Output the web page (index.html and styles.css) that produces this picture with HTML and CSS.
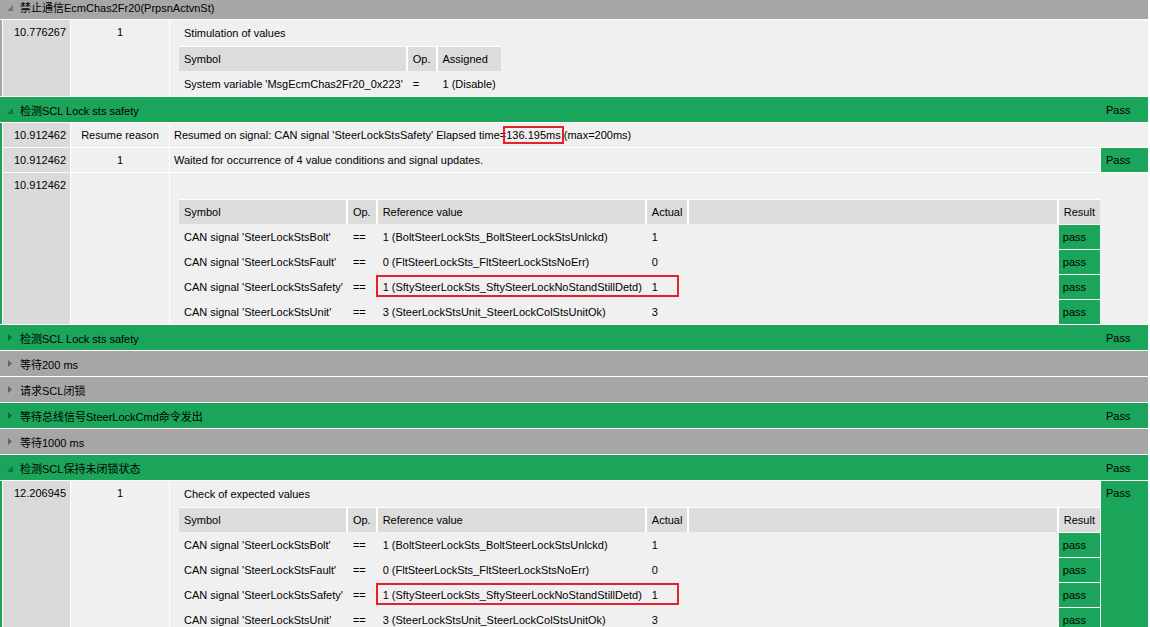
FILE: index.html
```
<!DOCTYPE html>
<html lang="en">
<head>
    <meta charset="UTF-8">
    <title>Test Report</title>
    <link rel="stylesheet" href="styles.css">
</head>
<body>
    <div class="report">

        <div class="section gray">
            <div class="sec-head">
                <svg class="tri open" width="6" height="6" viewBox="0 0 6 6"><polygon points="6,0 6,6 0,6"/></svg>
                <span class="title">禁止通信EcmChas2Fr20(PrpsnActvnSt)</span>
            </div>
            <div class="sec-body">
                <div class="row">
                    <div class="ts">10.776267</div>
                    <div class="step">1</div>
                    <div class="block span">
                        <div class="caption">Stimulation of values</div>
                        <table class="values">
                            <tr><th>Symbol</th><th>Op.</th><th>Assigned</th></tr>
                            <tr><td>System variable 'MsgEcmChas2Fr20_0x223'</td><td>=</td><td>1 (Disable)</td></tr>
                        </table>
                    </div>
                </div>
            </div>
        </div>

        <div class="section green">
            <div class="sec-head">
                <svg class="tri open" width="6" height="6" viewBox="0 0 6 6"><polygon points="6,0 6,6 0,6"/></svg>
                <span class="title">检测SCL Lock sts safety</span>
                <span class="verdict-label">Pass</span>
            </div>
            <div class="sec-body">
                <div class="row">
                    <div class="ts">10.912462</div>
                    <div class="step">Resume reason</div>
                    <div class="desc span">Resumed on signal: CAN signal 'SteerLockStsSafety' Elapsed time=<span class="hl">136.195ms</span> (max=200ms)</div>
                </div>
                <div class="row">
                    <div class="ts">10.912462</div>
                    <div class="step">1</div>
                    <div class="desc">Waited for occurrence of 4 value conditions and signal updates.</div>
                    <div class="verdict">Pass</div>
                </div>
                <div class="row">
                    <div class="ts">10.912462</div>
                    <div class="step"></div>
                    <div class="block span">
                        <div class="caption"></div>
                        <table class="values check short">
                            <tr><th>Symbol</th><th>Op.</th><th>Reference value</th><th>Actual</th><th class="fill"></th><th>Result</th></tr>
                            <tr><td>CAN signal 'SteerLockStsBolt'</td><td>==</td><td>1 (BoltSteerLockSts_BoltSteerLockStsUnlckd)</td><td>1</td><td></td><td class="pass">pass</td></tr>
                            <tr><td>CAN signal 'SteerLockStsFault'</td><td>==</td><td>0 (FltSteerLockSts_FltSteerLockStsNoErr)</td><td>0</td><td></td><td class="pass">pass</td></tr>
                            <tr><td>CAN signal 'SteerLockStsSafety'</td><td>==</td><td class="marked">1 (SftySteerLockSts_SftySteerLockNoStandStillDetd)<span class="mark"></span></td><td>1</td><td></td><td class="pass">pass</td></tr>
                            <tr><td>CAN signal 'SteerLockStsUnit'</td><td>==</td><td>3 (SteerLockStsUnit_SteerLockColStsUnitOk)</td><td>3</td><td></td><td class="pass">pass</td></tr>
                        </table>
                    </div>
                </div>
            </div>
        </div>

        <div class="section green">
            <div class="sec-head">
                <svg class="tri" width="4" height="7" viewBox="0 0 4 7"><polygon points="0,0 4,3.5 0,7"/></svg>
                <span class="title">检测SCL Lock sts safety</span>
                <span class="verdict-label">Pass</span>
            </div>
        </div>

        <div class="section gray">
            <div class="sec-head">
                <svg class="tri" width="4" height="7" viewBox="0 0 4 7"><polygon points="0,0 4,3.5 0,7"/></svg>
                <span class="title">等待200 ms</span>
            </div>
        </div>

        <div class="section gray">
            <div class="sec-head">
                <svg class="tri" width="4" height="7" viewBox="0 0 4 7"><polygon points="0,0 4,3.5 0,7"/></svg>
                <span class="title">请求SCL闭锁</span>
            </div>
        </div>

        <div class="section green">
            <div class="sec-head">
                <svg class="tri" width="4" height="7" viewBox="0 0 4 7"><polygon points="0,0 4,3.5 0,7"/></svg>
                <span class="title">等待总线信号SteerLockCmd命令发出</span>
                <span class="verdict-label">Pass</span>
            </div>
        </div>

        <div class="section gray">
            <div class="sec-head">
                <svg class="tri" width="4" height="7" viewBox="0 0 4 7"><polygon points="0,0 4,3.5 0,7"/></svg>
                <span class="title">等待1000 ms</span>
            </div>
        </div>

        <div class="section green">
            <div class="sec-head">
                <svg class="tri open" width="6" height="6" viewBox="0 0 6 6"><polygon points="6,0 6,6 0,6"/></svg>
                <span class="title">检测SCL保持未闭锁状态</span>
                <span class="verdict-label">Pass</span>
            </div>
            <div class="sec-body">
                <div class="row">
                    <div class="ts">12.206945</div>
                    <div class="step">1</div>
                    <div class="block">
                        <div class="caption">Check of expected values</div>
                        <table class="values check">
                            <tr><th>Symbol</th><th>Op.</th><th>Reference value</th><th>Actual</th><th class="fill"></th><th>Result</th></tr>
                            <tr><td>CAN signal 'SteerLockStsBolt'</td><td>==</td><td>1 (BoltSteerLockSts_BoltSteerLockStsUnlckd)</td><td>1</td><td></td><td class="pass">pass</td></tr>
                            <tr><td>CAN signal 'SteerLockStsFault'</td><td>==</td><td>0 (FltSteerLockSts_FltSteerLockStsNoErr)</td><td>0</td><td></td><td class="pass">pass</td></tr>
                            <tr><td>CAN signal 'SteerLockStsSafety'</td><td>==</td><td class="marked">1 (SftySteerLockSts_SftySteerLockNoStandStillDetd)<span class="mark"></span></td><td>1</td><td></td><td class="pass">pass</td></tr>
                            <tr><td>CAN signal 'SteerLockStsUnit'</td><td>==</td><td>3 (SteerLockStsUnit_SteerLockColStsUnitOk)</td><td>3</td><td></td><td class="pass">pass</td></tr>
                        </table>
                    </div>
                    <div class="verdict">Pass</div>
                </div>
            </div>
        </div>

    </div>
</body>
</html>
```

FILE: styles.css
```
html, body {
    overflow: hidden;
}
body {
    margin: 0;
    font-family: "Liberation Sans", Arial, "Noto Sans CJK SC", sans-serif;
    font-size: 11px;
    color: #000;
    background-color: #fff;
}
.report {
    width: 1148px;
    margin-top: -6px;
    display: flex;
    flex-direction: column;
    gap: 1px;
}
.section {
    display: flex;
    flex-direction: column;
    gap: 1px;
}
.sec-head {
    height: 25px;
    display: flex;
    align-items: center;
    padding-left: 8px;
}
.green .sec-head {
    background-color: #1aa55a;
}
.gray .sec-head {
    background-color: #a6a6a6;
}
.tri {
    fill: rgba(0,0,0,0.4);
    margin-right: 8px;
    flex: none;
}
.tri.open {
    margin-left: -1px;
    margin-right: 7px;
    fill: rgba(0,0,0,0.3);
    position: relative;
    top: 1px;
}
.title {
    flex: 1;
}
.verdict-label {
    width: 42px;
}
.sec-body {
    display: flex;
    flex-direction: column;
    gap: 1px;
    border-left: 2px solid;
}
.green .sec-body {
    border-color: #1aa55a;
}
.gray .sec-body {
    border-color: #a6a6a6;
}
.row {
    display: grid;
    grid-template-columns: 67px 98px 1fr 47px;
    column-gap: 1px;
    padding-left: 1px;
}
.ts {
    background-color: #dadada;
    text-align: right;
    padding-right: 4px;
    line-height: 24px;
}
.step {
    background-color: #f0f0f0;
    text-align: center;
    line-height: 24px;
}
.desc {
    background-color: #f0f0f0;
    padding-left: 4px;
    line-height: 24px;
    white-space: nowrap;
}
.block {
    background-color: #f0f0f0;
}
.span {
    grid-column: span 2;
}
.verdict {
    background-color: #1aa55a;
    padding-left: 5px;
    line-height: 24px;
}
.caption {
    height: 26px;
    line-height: 26px;
    padding-left: 14px;
}
.hl {
    outline: 2px solid #e3222d;
    outline-offset: 1px;
}
.values {
    margin-left: 9px;
    border-collapse: separate;
    border-spacing: 0;
    font-size: 11px;
}
.values th, .values td {
    padding: 0 5px;
    line-height: 24px;
    white-space: nowrap;
    text-align: left;
    font-weight: normal;
    border-top: 1px solid transparent;
}
.values th {
    background-color: #dcdcdc;
    border-top-color: #fff;
    border-right: 2px solid #fff;
}
.values th:last-child {
    border-right: none;
}
.values td.pass {
    background-color: #1aa55a;
    border-top-color: #fff;
    padding-left: 4px;
}
.check {
    width: calc(100% - 9px);
}
.check.short {
    width: calc(100% - 57px);
}
.values th.fill {
    width: 100%;
}
.marked {
    position: relative;
}
.mark {
    position: absolute;
    left: -2px;
    top: 0;
    width: 303px;
    height: 22px;
    border: 2px solid #e3222d;
    box-sizing: border-box;
}
```
